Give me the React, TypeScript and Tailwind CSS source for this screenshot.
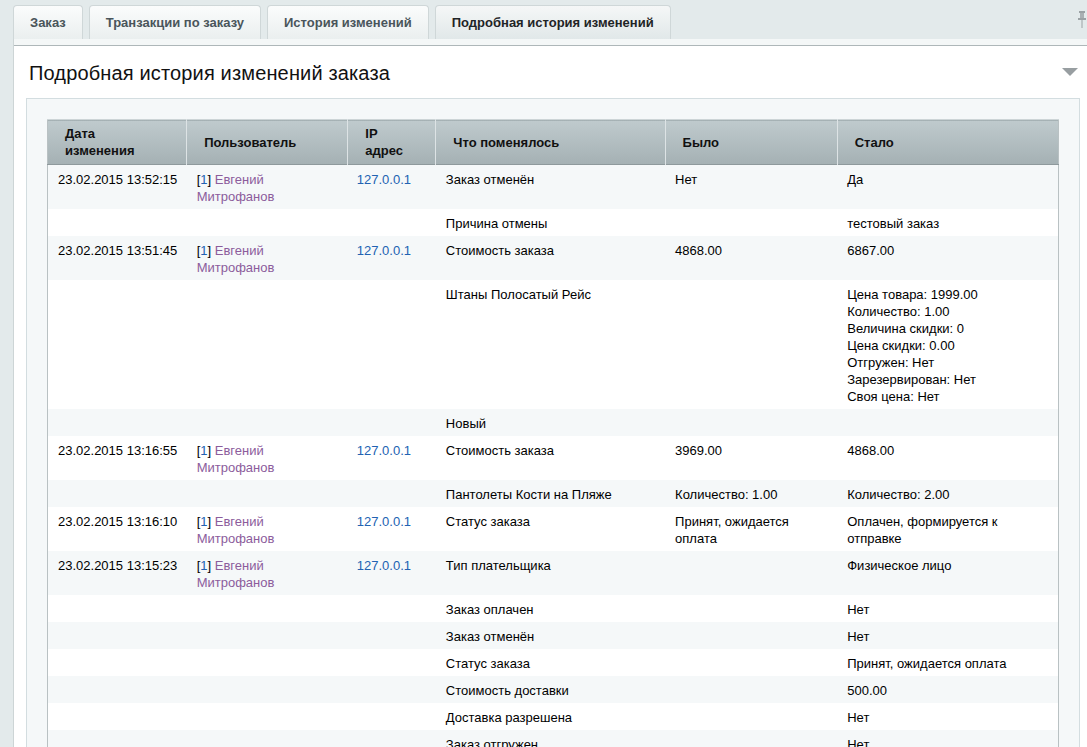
import React from "react";

type Row = {
  date?: string;
  user?: boolean;
  what: string;
  was?: React.ReactNode;
  now?: React.ReactNode;
};

const rows: Row[] = [
  { date: "23.02.2015 13:52:15", user: true, what: "Заказ отменён", was: "Нет", now: "Да" },
  { what: "Причина отмены", now: "тестовый заказ" },
  { date: "23.02.2015 13:51:45", user: true, what: "Стоимость заказа", was: "4868.00", now: "6867.00" },
  {
    what: "Штаны Полосатый Рейс",
    now: (
      <>
        Цена товара: 1999.00
        <br />
        Количество: 1.00
        <br />
        Величина скидки: 0
        <br />
        Цена скидки: 0.00
        <br />
        Отгружен: Нет
        <br />
        Зарезервирован: Нет
        <br />
        Своя цена: Нет
      </>
    ),
  },
  { what: "Новый" },
  { date: "23.02.2015 13:16:55", user: true, what: "Стоимость заказа", was: "3969.00", now: "4868.00" },
  { what: "Пантолеты Кости на Пляже", was: "Количество: 1.00", now: "Количество: 2.00" },
  {
    date: "23.02.2015 13:16:10",
    user: true,
    what: "Статус заказа",
    was: (
      <>
        Принят, ожидается
        <br />
        оплата
      </>
    ),
    now: (
      <>
        Оплачен, формируется к
        <br />
        отправке
      </>
    ),
  },
  { date: "23.02.2015 13:15:23", user: true, what: "Тип плательщика", now: "Физическое лицо" },
  { what: "Заказ оплачен", now: "Нет" },
  { what: "Заказ отменён", now: "Нет" },
  { what: "Статус заказа", now: "Принят, ожидается оплата" },
  { what: "Стоимость доставки", now: "500.00" },
  { what: "Доставка разрешена", now: "Нет" },
  { what: "Заказ отгружен", now: "Нет" },
];

const tabs = ["Заказ", "Транзакции по заказу", "История изменений", "Подробная история изменений"];

function Tab({ label, active }: { label: string; active?: boolean }) {
  return (
    <div
      className={
        "h-[34px] px-[16px] flex items-center rounded-t-[4px] border border-b-0 border-[#cfd7d8] font-bold text-[13px] bg-linear-to-b " +
        (active
          ? "from-[#f5f7f7] to-[#e1e8e9] text-[#1f2426]"
          : "from-[#fbfcfc] to-[#eaefef] text-[#4a555b]")
      }
    >
      {label}
    </div>
  );
}

function Pin() {
  return (
    <svg width="10" height="17" viewBox="0 0 10 17" className="absolute right-[0px] top-[11px]">
      <rect x="2" y="0" width="6" height="2" fill="#9ba2a5" />
      <rect x="3" y="2" width="4" height="5" fill="#a9b0b3" />
      <rect x="1" y="7" width="8" height="2" fill="#9ba2a5" />
      <rect x="4.5" y="9" width="1" height="8" fill="#9ba2a5" />
    </svg>
  );
}

const cell = "align-top pl-[10px] pr-[6px] pt-[6px] pb-[4px] leading-[17px]";

export default function App() {
  return (
    <div className="w-[1087px] h-[747px] overflow-hidden bg-[#e3eaeb] font-['Liberation_Sans',Arial,sans-serif] text-[13px] text-black">
      <div className="relative flex items-end h-[39px] pl-[13px] gap-[6px]">
        {tabs.map((t, i) => (
          <Tab key={t} label={t} active={i === 3} />
        ))}
        <Pin />
      </div>
      <div className="ml-[13px] w-[1080px] bg-white border-l border-[#cdd5d6] pb-[40px]">
        <div className="h-[7px] bg-[#f4f7f7] border-b border-[#aeb7b9]" />
        <div className="relative pl-[12px]">
          <h2 className="pt-[15px] pl-[3px] text-[20px] leading-[24px] tracking-[0.15px] font-normal text-[#111]">
            Подробная история изменений заказа
          </h2>
          <svg width="16" height="8" viewBox="0 0 16 8" className="absolute right-[15px] top-[22px]">
            <polygon points="0,0 16,0 8,8" fill="#989ea1" />
          </svg>
          <div className="mt-[13px] w-[1054px] border border-[#d3dde0] bg-[#f5f8f9] pl-[20px] pt-[20px] pb-[40px]">
            <table className="table-fixed border-collapse w-[1012px] border-x border-[#b9c1c3]">
              <colgroup>
                <col className="w-[139px]" />
                <col className="w-[161px]" />
                <col className="w-[88px]" />
                <col className="w-[229px]" />
                <col className="w-[172px]" />
                <col className="w-[221px]" />
              </colgroup>
              <thead>
                <tr className="bg-linear-to-b from-[#bfcacd] to-[#a5b1b4] border-b border-[#8e999c] border-t border-t-[#cdd5d7]">
                  {[
                    <>
                      Дата
                      <br />
                      изменения
                    </>,
                    "Пользователь",
                    <>
                      IP
                      <br />
                      адрес
                    </>,
                    "Что поменялось",
                    "Было",
                    "Стало",
                  ].map((h, i) => (
                    <th
                      key={i}
                      className={
                        "text-left align-middle font-bold text-[13px] leading-[17px] text-[#111] pl-[17px] pr-[6px] pt-[5px] pb-[5px] h-[44px] " +
                        (i > 0 ? "border-l border-[#dde3e5]" : "")
                      }
                    >
                      {h}
                    </th>
                  ))}
                </tr>
              </thead>
              <tbody>
                {rows.map((r, i) => (
                  <tr key={i} className={i % 2 === 0 ? "bg-[#f5f8f9]" : "bg-white"}>
                    <td className={cell}>{r.date}</td>
                    <td className={cell}>
                      {r.user && (
                        <>
                          [<span className="text-[#2262b2]">1</span>]{" "}
                          <span className="text-[#8c5c9c]">Евгений</span>
                          <br />
                          <span className="text-[#8c5c9c]">Митрофанов</span>
                        </>
                      )}
                    </td>
                    <td className={cell + " !pl-[9px] text-[#2262b2]"}>{r.user ? "127.0.0.1" : ""}</td>
                    <td className={cell}>{r.what}</td>
                    <td className={cell}>{r.was}</td>
                    <td className={cell}>{r.now}</td>
                  </tr>
                ))}
              </tbody>
            </table>
          </div>
        </div>
      </div>
    </div>
  );
}
